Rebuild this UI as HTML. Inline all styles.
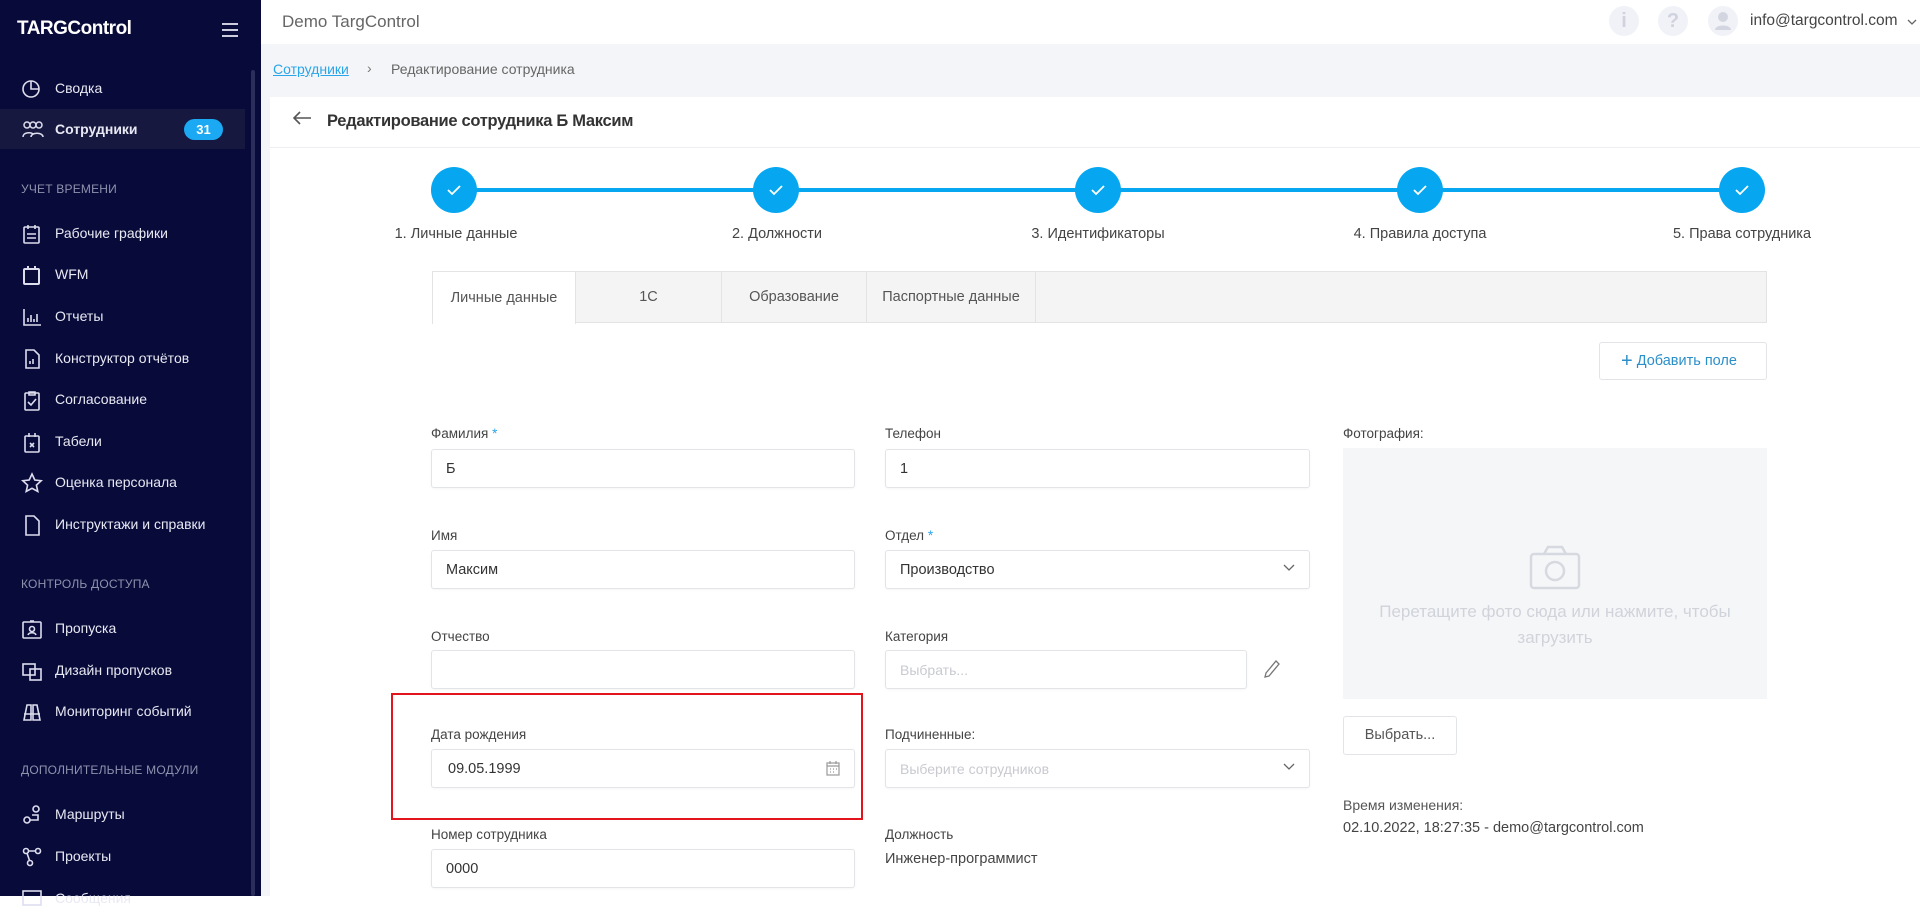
<!DOCTYPE html>
<html><head><meta charset="utf-8">
<style>
*{box-sizing:border-box;margin:0;padding:0}
body{width:1920px;height:896px;overflow:hidden;background:#fff;font-family:"Liberation Sans",sans-serif;color:#333;position:relative}
.a{position:absolute;white-space:nowrap}
#sb{position:absolute;left:0;top:0;width:261px;height:896px;background:#080a3a;color:#fff}
#sb .it{position:absolute;left:0;width:245px;height:40px;font-size:14px;color:#e8e9f2}
#sb .it span{position:absolute;left:55px;top:12px}
#sb .it svg{position:absolute;left:21px;top:10px}
#sb .sec{position:absolute;left:21px;font-size:12px;color:#8f92ad;letter-spacing:.2px}
.lbl{font-size:13.5px;color:#444}
.inp{position:absolute;height:39px;border:1px solid #e2e4e8;border-radius:3px;background:#fff;font-size:14.5px;color:#333;padding:11px 14px;box-shadow:0 1px 2px rgba(0,0,0,.04)}
.chev{position:absolute;right:14px;top:13px}
.step{position:absolute;top:167px;width:46px;height:46px;border-radius:50%;background:#06a7f0}
.step svg{position:absolute;left:15px;top:16px}
.sl{position:absolute;top:226px;font-size:14.5px;color:#444;transform:translateX(-50%)}
.tab{position:absolute;top:271px;height:52px;font-size:14.5px;color:#555;text-align:center;line-height:52px;border-right:1px solid #e3e3e3}
</style></head><body>
<div id="sb">
 <div class="a" style="left:17px;top:18px;font-size:19px;font-weight:bold;color:#fff;letter-spacing:-.5px">TARGControl</div>
 <svg class="a" style="left:221px;top:22px" width="18" height="16"><path d="M1 2h16M1 8h16M1 14h16" stroke="#ccd" stroke-width="2"/></svg>
 <div style="position:absolute;left:251px;top:70px;width:4px;height:826px;background:#2b2e5a;border-radius:2px"></div>
 <div class="it" style="top:68px"><svg width="22" height="22" fill="none" stroke="#dde" stroke-width="1.6"><circle cx="10" cy="11" r="8"/><path d="M10 3v8h8"/></svg><span>Сводка</span></div>
 <div class="it" style="top:109px;background:#16183f"><svg width="24" height="22" fill="none" stroke="#dde" stroke-width="1.5"><circle cx="6" cy="6" r="3"/><circle cx="12" cy="6" r="3"/><circle cx="18" cy="6" r="3"/><path d="M2 18c0-5 8-5 10-3M10 18c0-5 12-5 12 0"/></svg><span style="font-weight:bold">Сотрудники</span>
  <div style="position:absolute;left:184px;top:10px;width:39px;height:21px;border-radius:11px;background:#1aa9f2;font-size:13px;font-weight:bold;text-align:center;line-height:21px;color:#fff">31</div></div>
 <div class="sec" style="top:182px">УЧЕТ ВРЕМЕНИ</div>
 <div class="it" style="top:213px"><svg width="22" height="22" fill="none" stroke="#dde" stroke-width="1.6"><rect x="3" y="4" width="15" height="16" rx="1"/><path d="M7 2v4M14 2v4M6 11h9M6 15h9"/></svg><span>Рабочие графики</span></div>
 <div class="it" style="top:254px"><svg width="22" height="22" fill="none" stroke="#dde" stroke-width="2"><rect x="3" y="5" width="15" height="15" rx="1"/><path d="M7 2v4M14 2v4"/></svg><span>WFM</span></div>
 <div class="it" style="top:296px"><svg width="22" height="22" fill="none" stroke="#dde" stroke-width="1.6"><path d="M3 3v16h17M7 16v-4M10 16v-7M13 16v-3M16 16v-8"/></svg><span>Отчеты</span></div>
 <div class="it" style="top:338px"><svg width="22" height="22" fill="none" stroke="#dde" stroke-width="1.6"><path d="M5 2h8l5 5v13H5z"/><path d="M9 16v-3M12 16v-5"/></svg><span>Конструктор отчётов</span></div>
 <div class="it" style="top:379px"><svg width="22" height="22" fill="none" stroke="#dde" stroke-width="1.6"><rect x="4" y="4" width="14" height="17" rx="1"/><path d="M8 3h6v3H8zM7 13l3 3 5-6"/></svg><span>Согласование</span></div>
 <div class="it" style="top:421px"><svg width="22" height="22" fill="none" stroke="#dde" stroke-width="1.6"><rect x="4" y="5" width="14" height="16" rx="1"/><path d="M8 2v4M14 2v4M9 12l4 4M13 12l-4 4"/></svg><span>Табели</span></div>
 <div class="it" style="top:462px"><svg width="22" height="22" fill="none" stroke="#dde" stroke-width="1.6"><path d="M11 2l2.8 6 6.4.7-4.8 4.4 1.4 6.4L11 16.3 5.2 19.5l1.4-6.4L1.8 8.7 8.2 8z"/></svg><span>Оценка персонала</span></div>
 <div class="it" style="top:504px"><svg width="22" height="22" fill="none" stroke="#dde" stroke-width="1.6"><path d="M5 2h8l5 5v14H5z"/></svg><span>Инструктажи и справки</span></div>
 <div class="sec" style="top:577px">КОНТРОЛЬ ДОСТУПА</div>
 <div class="it" style="top:608px"><svg width="22" height="22" fill="none" stroke="#dde" stroke-width="1.6"><rect x="2" y="4" width="18" height="16" rx="1"/><circle cx="11" cy="11" r="2.5"/><path d="M7 17c1-3 7-3 8 0M9 3h4"/></svg><span>Пропуска</span></div>
 <div class="it" style="top:650px"><svg width="22" height="22" fill="none" stroke="#dde" stroke-width="1.6"><rect x="2" y="4" width="12" height="11"/><rect x="9" y="9" width="11" height="11"/></svg><span>Дизайн пропусков</span></div>
 <div class="it" style="top:691px"><svg width="22" height="22" fill="none" stroke="#dde" stroke-width="1.6"><path d="M3 19l3-15h4v15zM12 19V4h4l3 15zM3 13h16"/></svg><span>Мониторинг событий</span></div>
 <div class="sec" style="top:763px">ДОПОЛНИТЕЛЬНЫЕ МОДУЛИ</div>
 <div class="it" style="top:794px"><svg width="22" height="22" fill="none" stroke="#dde" stroke-width="1.6"><circle cx="6" cy="16" r="3"/><circle cx="15" cy="5" r="3"/><path d="M9 16h8v-5h-6"/></svg><span>Маршруты</span></div>
 <div class="it" style="top:836px"><svg width="22" height="22" fill="none" stroke="#dde" stroke-width="1.6"><circle cx="5" cy="5" r="2.5"/><circle cx="17" cy="5" r="2.5"/><circle cx="9" cy="17" r="2.5"/><path d="M7.5 5h7M6 7l2.5 7.5"/></svg><span>Проекты</span></div>
 <div class="it" style="top:878px"><svg width="22" height="22" fill="none" stroke="#dde" stroke-width="1.6"><rect x="2" y="3" width="18" height="14"/></svg><span>Сообщения</span></div>
</div>

<div class="a" style="left:282px;top:12px;font-size:17px;color:#666">Demo TargControl</div>
<div class="a" style="left:1609px;top:6px;width:30px;height:30px;border-radius:50%;background:#f1f2f7;color:#d0d3de;font-size:20px;font-weight:bold;text-align:center;line-height:30px">i</div>
<div class="a" style="left:1658px;top:6px;width:30px;height:30px;border-radius:50%;background:#f1f2f7;color:#d0d3de;font-size:20px;font-weight:bold;text-align:center;line-height:30px">?</div>
<div class="a" style="left:1708px;top:6px;width:30px;height:30px;border-radius:50%;background:#f1f2f7"><svg width="30" height="30"><circle cx="15" cy="11" r="5" fill="#d3d6e0"/><path d="M7 24c0-6 16-6 16 0z" fill="#d3d6e0"/></svg></div>
<div class="a" style="left:1750px;top:12px;font-size:15.5px;color:#444">info@targcontrol.com</div>
<svg class="a" style="left:1907px;top:18px" width="10" height="8"><path d="M1 2l4 4 4-4" stroke="#666" fill="none" stroke-width="1.3"/></svg>

<div class="a" style="left:261px;top:44px;width:1659px;height:852px;background:#f4f5f8"></div>
<div class="a" style="left:273px;top:61px;font-size:14px;color:#2aa5e8;text-decoration:underline">Сотрудники</div>
<div class="a" style="left:367px;top:60px;font-size:14px;color:#777">›</div>
<div class="a" style="left:391px;top:61px;font-size:14px;color:#666">Редактирование сотрудника</div>

<div class="a" style="left:270px;top:97px;width:1650px;height:799px;background:#fff"></div>
<div class="a" style="left:270px;top:147px;width:1650px;height:1px;background:#eceef2"></div>
<svg class="a" style="left:292px;top:110px" width="20" height="16"><path d="M19 8H2M8 2L2 8l6 6" stroke="#555" fill="none" stroke-width="1.6"/></svg>
<div class="a" style="left:327px;top:112px;font-size:16.5px;font-weight:bold;color:#333;letter-spacing:-.3px">Редактирование сотрудника Б Максим</div>

<div class="a" style="left:454px;top:188px;width:1288px;height:4px;background:#06a7f0"></div>
<div class="step" style="left:431px"><svg width="16" height="14"><path d="M2 7l4 4 8-8" stroke="#fff" fill="none" stroke-width="1.8"/></svg></div>
<div class="step" style="left:753px"><svg width="16" height="14"><path d="M2 7l4 4 8-8" stroke="#fff" fill="none" stroke-width="1.8"/></svg></div>
<div class="step" style="left:1075px"><svg width="16" height="14"><path d="M2 7l4 4 8-8" stroke="#fff" fill="none" stroke-width="1.8"/></svg></div>
<div class="step" style="left:1397px"><svg width="16" height="14"><path d="M2 7l4 4 8-8" stroke="#fff" fill="none" stroke-width="1.8"/></svg></div>
<div class="step" style="left:1719px"><svg width="16" height="14"><path d="M2 7l4 4 8-8" stroke="#fff" fill="none" stroke-width="1.8"/></svg></div>
<div class="sl" style="left:456px">1. Личные данные</div>
<div class="sl" style="left:777px">2. Должности</div>
<div class="sl" style="left:1098px">3. Идентификаторы</div>
<div class="sl" style="left:1420px">4. Правила доступа</div>
<div class="sl" style="left:1742px">5. Права сотрудника</div>

<div class="a" style="left:432px;top:271px;width:1335px;height:52px;background:#f4f4f4;border:1px solid #e3e3e3"></div>
<div class="tab" style="left:432px;width:144px;background:#fff;border-left:1px solid #e3e3e3;border-top:1px solid #e3e3e3;height:53px">Личные данные</div>
<div class="tab" style="left:576px;width:146px">1С</div>
<div class="tab" style="left:722px;width:145px">Образование</div>
<div class="tab" style="left:867px;width:169px">Паспортные данные</div>

<div class="a" style="left:1599px;top:342px;width:168px;height:38px;border:1px solid #e2e4e8;border-radius:3px;font-size:14.5px;color:#2b8fc9;line-height:36px;padding-left:21px"><span style="font-size:20px;vertical-align:-2px">+</span> Добавить поле</div>

<div class="a lbl" style="left:431px;top:426px">Фамилия <span style="color:#2aa5e8">*</span></div>
<div class="inp" style="left:431px;top:449px;width:424px">Б</div>
<div class="a lbl" style="left:431px;top:528px">Имя</div>
<div class="inp" style="left:431px;top:550px;width:424px">Максим</div>
<div class="a lbl" style="left:431px;top:629px">Отчество</div>
<div class="inp" style="left:431px;top:650px;width:424px"></div>
<div class="a lbl" style="left:431px;top:727px">Дата рождения</div>
<div class="inp" style="left:431px;top:749px;width:424px;padding-left:16px">09.05.1999
 <svg class="a" style="right:14px;top:11px" width="14" height="15" fill="none" stroke="#999" stroke-width="1.2"><rect x="1" y="2" width="12" height="12"/><path d="M1 5h12M4 0v3M10 0v3M4 8h1M7 8h1M10 8h1M4 11h1M7 11h1"/></svg></div>
<div class="a" style="left:391px;top:693px;width:472px;height:127px;border:2px solid #e3141b"></div>
<div class="a lbl" style="left:431px;top:827px">Номер сотрудника</div>
<div class="inp" style="left:431px;top:849px;width:424px">0000</div>

<div class="a lbl" style="left:885px;top:426px">Телефон</div>
<div class="inp" style="left:885px;top:449px;width:425px">1</div>
<div class="a lbl" style="left:885px;top:528px">Отдел <span style="color:#2aa5e8">*</span></div>
<div class="inp" style="left:885px;top:550px;width:425px">Производство<svg class="chev" width="12" height="8"><path d="M1 1l5 5 5-5" stroke="#666" fill="none" stroke-width="1.3"/></svg></div>
<div class="a lbl" style="left:885px;top:629px">Категория</div>
<div class="inp" style="left:885px;top:650px;width:362px;color:#c8cad0;font-size:14px">Выбрать...</div>
<svg class="a" style="left:1263px;top:659px" width="18" height="20" fill="none" stroke="#777" stroke-width="1.3"><path d="M13 2l3 3-10 12-4 1 1-4z"/></svg>
<div class="a lbl" style="left:885px;top:727px">Подчиненные:</div>
<div class="inp" style="left:885px;top:749px;width:425px;color:#c8cad0;font-size:14px">Выберите сотрудников<svg class="chev" width="12" height="8"><path d="M1 1l5 5 5-5" stroke="#666" fill="none" stroke-width="1.3"/></svg></div>
<div class="a lbl" style="left:885px;top:827px">Должность</div>
<div class="a" style="left:885px;top:851px;font-size:14.5px;color:#444">Инженер-программист</div>

<div class="a lbl" style="left:1343px;top:426px">Фотография:</div>
<div class="a" style="left:1343px;top:448px;width:424px;height:251px;background:#f5f6f8"></div>
<svg class="a" style="left:1529px;top:545px" width="52" height="46" fill="none" stroke="#d6d9e0" stroke-width="2.5"><rect x="2" y="9" width="48" height="34" rx="3"/><path d="M15 9l4-7h14l4 7"/><circle cx="26" cy="26" r="9"/></svg>
<div class="a" style="left:1343px;top:599px;width:424px;text-align:center;font-size:17px;color:#d0d3da;line-height:26px;white-space:normal">Перетащите фото сюда или нажмите, чтобы<br>загрузить</div>
<div class="a" style="left:1343px;top:716px;width:114px;height:39px;border:1px solid #e2e4e8;border-radius:3px;font-size:14.5px;color:#555;text-align:center;line-height:37px">Выбрать...</div>
<div class="a" style="left:1343px;top:797px;font-size:14px;color:#555">Время изменения:</div>
<div class="a" style="left:1343px;top:820px;font-size:14.5px;color:#444">02.10.2022, 18:27:35 - demo@targcontrol.com</div>
</body></html>
